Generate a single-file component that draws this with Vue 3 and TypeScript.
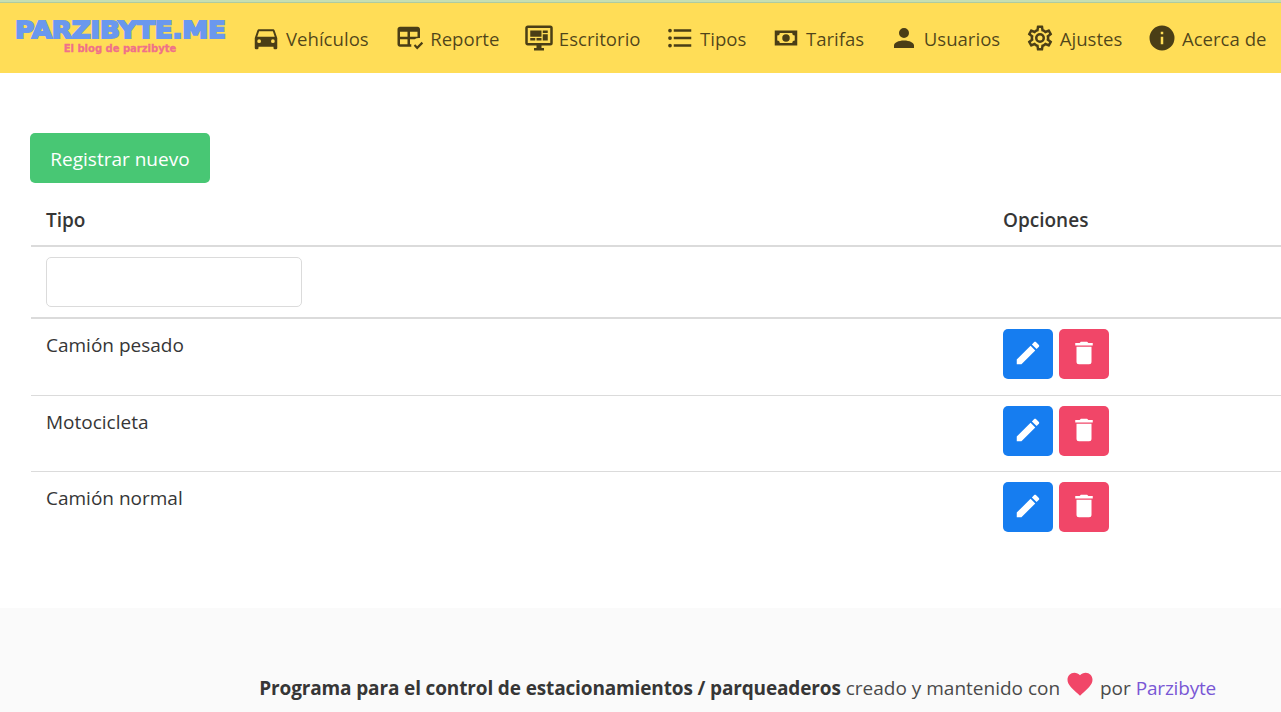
<script setup lang="ts">
const navItems = [
  { label: 'Vehículos', d: 'M5,11L6.5,6.5H17.5L19,11M17.5,16A1.5,1.5 0 0,1 16,14.5A1.5,1.5 0 0,1 17.5,13A1.5,1.5 0 0,1 19,14.5A1.5,1.5 0 0,1 17.5,16M6.5,16A1.5,1.5 0 0,1 5,14.5A1.5,1.5 0 0,1 6.5,13A1.5,1.5 0 0,1 8,14.5A1.5,1.5 0 0,1 6.5,16M18.92,6C18.72,5.42 18.16,5 17.5,5H6.5C5.84,5 5.28,5.42 5.08,6L3,12V20A1,1 0 0,0 4,21H5A1,1 0 0,0 6,20V19H18V20A1,1 0 0,0 19,21H20A1,1 0 0,0 21,20V12L18.92,6Z' },
  { label: 'Reporte', d: 'M4 3H18C19.1 3 20 3.9 20 5V12.08C18.45 11.82 16.92 12.18 15.68 13H12V17H13.08C12.97 17.68 12.97 18.35 13.08 19H4C2.9 19 2 18.1 2 17V5C2 3.9 2.9 3 4 3M4 7V11H10V7H4M12 7V11H18V7H12M4 13V17H10V13H4M17.75 21.16L15 18.16L16.16 17L17.75 18.59L21.34 15L22.5 16.41L17.75 21.16Z' },
  { label: 'Escritorio', d: 'M21,16V4H3V16H21M21,2A2,2 0 0,1 23,4V16A2,2 0 0,1 21,18H14V20H16V22H8V20H10V18H3C1.89,18 1,17.1 1,16V4C1,2.89 1.89,2 3,2H21M5,6H14V11H5V6M15,6H19V8H15V6M19,9V14H15V9H19M5,12H9V14H5V12M10,12H14V14H10V12Z' },
  { label: 'Tipos', d: 'M7,5H21V7H7V5M7,13V11H21V13H7M4,4.5A1.5,1.5 0 0,1 5.5,6A1.5,1.5 0 0,1 4,7.5A1.5,1.5 0 0,1 2.5,6A1.5,1.5 0 0,1 4,4.5M4,10.5A1.5,1.5 0 0,1 5.5,12A1.5,1.5 0 0,1 4,13.5A1.5,1.5 0 0,1 2.5,12A1.5,1.5 0 0,1 4,10.5M7,19V17H21V19H7M4,16.5A1.5,1.5 0 0,1 5.5,18A1.5,1.5 0 0,1 4,19.5A1.5,1.5 0 0,1 2.5,18A1.5,1.5 0 0,1 4,16.5Z' },
  { label: 'Tarifas', d: 'M3,6H21V18H3V6M12,9A3,3 0 0,1 15,12A3,3 0 0,1 12,15A3,3 0 0,1 9,12A3,3 0 0,1 12,9M7,8A2,2 0 0,1 5,10V14A2,2 0 0,1 7,16H17A2,2 0 0,1 19,14V10A2,2 0 0,1 17,8H7Z' },
  { label: 'Usuarios', d: 'M12,4A4,4 0 0,1 16,8A4,4 0 0,1 12,12A4,4 0 0,1 8,8A4,4 0 0,1 12,4M12,14C16.42,14 20,15.79 20,18V20H4V18C4,15.79 7.58,14 12,14Z' },
  { label: 'Ajustes', d: 'M12,8A4,4 0 0,1 16,12A4,4 0 0,1 12,16A4,4 0 0,1 8,12A4,4 0 0,1 12,8M12,10A2,2 0 0,0 10,12A2,2 0 0,0 12,14A2,2 0 0,0 14,12A2,2 0 0,0 12,10M10,22C9.75,22 9.54,21.82 9.5,21.58L9.13,18.93C8.5,18.68 7.96,18.34 7.44,17.94L4.95,18.95C4.73,19.03 4.46,18.95 4.34,18.73L2.34,15.27C2.21,15.05 2.27,14.78 2.46,14.63L4.57,12.97L4.5,12L4.57,11L2.46,9.37C2.27,9.22 2.21,8.95 2.34,8.73L4.34,5.27C4.46,5.05 4.73,4.96 4.95,5.05L7.44,6.05C7.96,5.66 8.5,5.32 9.13,5.07L9.5,2.42C9.54,2.18 9.75,2 10,2H14C14.25,2 14.46,2.18 14.5,2.42L14.87,5.07C15.5,5.32 16.04,5.66 16.56,6.05L19.05,5.05C19.27,4.96 19.54,5.05 19.66,5.27L21.66,8.73C21.79,8.95 21.73,9.22 21.54,9.37L19.43,11L19.5,12L19.43,13L21.54,14.63C21.73,14.78 21.79,15.05 21.66,15.27L19.66,18.73C19.54,18.95 19.27,19.04 19.05,18.95L16.56,17.95C16.04,18.34 15.5,18.68 14.87,18.93L14.5,21.58C14.46,21.82 14.25,22 14,22H10M11.25,4L10.88,6.61C9.68,6.86 8.62,7.5 7.85,8.39L5.44,7.35L4.69,8.65L6.8,10.2C6.4,11.37 6.4,12.64 6.8,13.8L4.68,15.36L5.43,16.66L7.86,15.62C8.63,16.5 9.68,17.14 10.87,17.38L11.24,20H12.76L13.13,17.39C14.32,17.14 15.37,16.5 16.14,15.62L18.57,16.66L19.32,15.36L17.2,13.81C17.6,12.64 17.6,11.37 17.2,10.2L19.31,8.65L18.56,7.35L16.15,8.39C15.38,7.5 14.32,6.86 13.12,6.62L12.75,4H11.25Z' },
  { label: 'Acerca de', d: 'M13,9H11V7H13M13,17H11V11H13M12,2A10,10 0 0,0 2,12A10,10 0 0,0 12,22A10,10 0 0,0 22,12A10,10 0 0,0 12,2Z' },
]
const rows = ['Camión pesado', 'Motocicleta', 'Camión normal']
const pencil = 'M20.71,7.04C21.1,6.65 21.1,6 20.71,5.63L18.37,3.29C18,2.9 17.35,2.9 16.96,3.29L15.12,5.12L18.87,8.87M3,17.25V21H6.75L17.81,9.93L14.06,6.18L3,17.25Z'
const trash = 'M19,4H15.5L14.5,3H9.5L8.5,4H5V6H19M6,19A2,2 0 0,0 8,21H16A2,2 0 0,0 18,19V7H6V19Z'
const heart = 'M12,21.35L10.55,20.03C5.4,15.36 2,12.27 2,8.5C2,5.41 4.42,3 7.5,3C9.24,3 10.91,3.81 12,5.08C13.09,3.81 14.76,3 16.5,3C19.58,3 22,5.41 22,8.5C22,12.27 18.6,15.36 13.45,20.03L12,21.35Z'
</script>

<template>
  <div class="page">
    <div class="strip"></div>
    <nav class="navbar">
      <div class="brand">
        <span class="brand-title">PARZIBYTE.ME</span>
        <span class="brand-sub">El blog de parzibyte</span>
      </div>
      <a v-for="item in navItems" :key="item.label" class="nav-item">
        <svg class="nav-icon" viewBox="0 0 24 24"><path :d="item.d" /></svg>
        <span class="nav-label">{{ item.label }}</span>
      </a>
    </nav>
    <main class="content">
      <button class="btn-new">Registrar nuevo</button>
      <table class="grid">
        <thead>
          <tr>
            <th class="col-type">Tipo</th>
            <th>Opciones</th>
          </tr>
        </thead>
        <tbody>
          <tr class="filter-row">
            <td><input class="filter" type="text" /></td>
            <td></td>
          </tr>
          <tr v-for="row in rows" :key="row" class="data-row">
            <td>{{ row }}</td>
            <td>
              <div class="actions">
                <button class="icon-btn edit"><svg viewBox="0 0 24 24"><path :d="pencil" /></svg></button>
                <button class="icon-btn remove"><svg viewBox="0 0 24 24"><path :d="trash" /></svg></button>
              </div>
            </td>
          </tr>
        </tbody>
      </table>
    </main>
    <footer class="footer">
      <p>
        <strong>Programa para el control de estacionamientos / parqueaderos</strong>
        creado y mantenido con
        <svg class="heart" viewBox="0 0 24 24"><path :d="heart" /></svg>
        por <a class="link">Parzibyte</a>
      </p>
    </footer>
  </div>
</template>

<style>
html, body { margin: 0; overflow: hidden; }
</style>

<style scoped>
.page {
  height: 712px;
  overflow: hidden;
  background: #fff;
  color: #4a4a4a;
  font-family: "Open Sans", "Noto Sans", sans-serif;
  font-size: 19px;
}
.strip { height: 2px; background: #c6deb2; border-bottom: 1px solid #aecba0; }
.navbar {
  display: flex;
  align-items: center;
  height: 70px;
  background: #ffdd57;
  color: rgba(0, 0, 0, 0.7);
  white-space: nowrap;
  font-size: 18.6px;
}
.brand {
  flex: none;
  display: flex;
  flex-direction: column;
  align-items: center;
  width: 212px;
  margin-left: 14px;
  margin-right: 25px;
  margin-top: -1px;
}
.brand-title {
  display: inline-block;
  font-family: "DejaVu Sans", sans-serif;
  font-weight: 700;
  font-size: 23px;
  line-height: 20px;
  color: #6a98ee;
  -webkit-text-stroke: 1.8px #6a98ee;
  letter-spacing: -0.2px;
  transform: scaleX(1.14);
}
.brand-sub {
  font-family: "DejaVu Sans", sans-serif;
  font-weight: 700;
  font-size: 10px;
  line-height: 14px;
  color: #f0708a;
  -webkit-text-stroke: 0.3px #f0708a;
  margin-top: 2px;
}
.nav-item {
  flex: none;
  display: flex;
  align-items: center;
  gap: 5px;
  margin-right: 24.5px;
}
.nav-item:first-of-type { margin-right: 26.5px; }
.nav-icon { width: 30px; height: 30px; flex: none; }
.nav-icon path { fill: #4a3e16; }
.content { padding: 60px 0 0 30px; height: 475px; }
.btn-new {
  display: block;
  width: 180px;
  height: 50px;
  border: 0;
  border-radius: 5px;
  background: #48c774;
  color: #fff;
  font: inherit;
  padding: 2px 0 0;
}
.grid {
  width: 1250px;
  margin-left: 1px;
  table-layout: fixed;
  border-collapse: collapse;
  margin-top: 12px;
  color: #363636;
}
.grid th {
  height: 48px;
  padding: 1px 0 1px 15px;
  text-align: left;
  font-weight: 600;
  color: #363636;
  border-bottom: 2px solid #dbdbdb;
}
.col-type { width: 942px; }
.grid td {
  padding: 10px 0 0 15px;
  vertical-align: top;
  line-height: 32px;
}
.filter-row td { height: 60px; border-bottom: 2px solid #dbdbdb; }
.data-row td { height: 66px; border-bottom: 1px solid #dbdbdb; }
.data-row:nth-child(3) td { height: 65px; }
.data-row:last-child td { border-bottom: 0; }
.filter {
  display: block;
  width: 256px;
  height: 50px;
  box-sizing: border-box;
  border: 1px solid #dbdbdb;
  border-radius: 5px;
  background: #fff;
}
.actions { display: flex; gap: 6px; }
.icon-btn {
  display: flex;
  align-items: center;
  justify-content: center;
  width: 50px;
  height: 50px;
  padding: 0 0 2px;
  border: 0;
  border-radius: 5px;
}
.icon-btn svg { width: 30px; height: 30px; }
.icon-btn path { fill: #fff; }
.edit { background: #167df0; }
.remove { background: #f14668; }
.footer {
  height: 104px;
  background: #fafafa;
  padding: 61px 65px 0 0;
  box-sizing: border-box;
  display: flex;
  justify-content: flex-end;
}
.footer p { margin: 0; white-space: nowrap; line-height: 32px; }
.footer strong { color: #363636; font-weight: 700; letter-spacing: -0.14px; }
.heart { width: 30px; height: 30px; vertical-align: -4px; }
.heart path { fill: #f14668; }
.link { color: #7957d5; letter-spacing: -0.2px; }
</style>
